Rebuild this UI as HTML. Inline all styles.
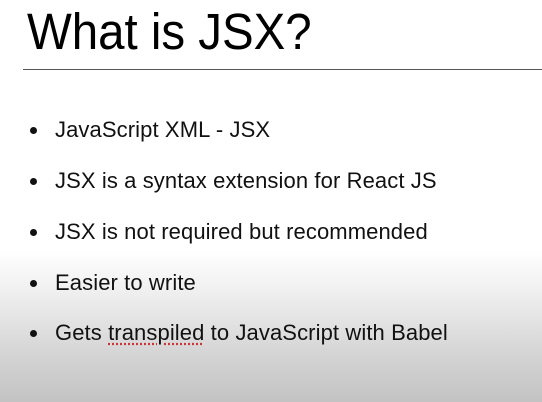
<!DOCTYPE html>
<html><head><style>
html,body{margin:0;padding:0}
body{width:542px;height:402px;overflow:hidden;position:relative;font-family:"Liberation Sans",Arial,sans-serif;color:#111;
background:linear-gradient(to bottom,#fff 0px,#fff 250px,#ececec 300px,#d2d2d2 360px,#c3c3c3 402px);}
.t{position:absolute;left:27px;top:2px;font-size:51px;line-height:60px;color:#000;transform:scaleX(0.93);transform-origin:left}
.hr{position:absolute;left:23px;right:0;top:69px;height:1px;background:#555;}
.i{position:absolute;left:55px;font-size:22px;line-height:24px;white-space:nowrap;letter-spacing:0.1px}
.i:before{content:"";position:absolute;left:-25px;top:9px;width:7px;height:7px;border-radius:50%;background:#111}
u{text-decoration:underline dotted #c33;text-underline-offset:3px}
</style></head><body>
<div class="t">What is JSX?</div>
<div class="hr"></div>
<div class="i" style="top:118px">JavaScript XML - JSX</div>
<div class="i" style="top:169px">JSX is a syntax extension for React JS</div>
<div class="i" style="top:220px">JSX is not required but recommended</div>
<div class="i" style="top:271px">Easier to write</div>
<div class="i" style="top:321px">Gets <u>transpiled</u> to JavaScript with Babel</div>
</body></html>
